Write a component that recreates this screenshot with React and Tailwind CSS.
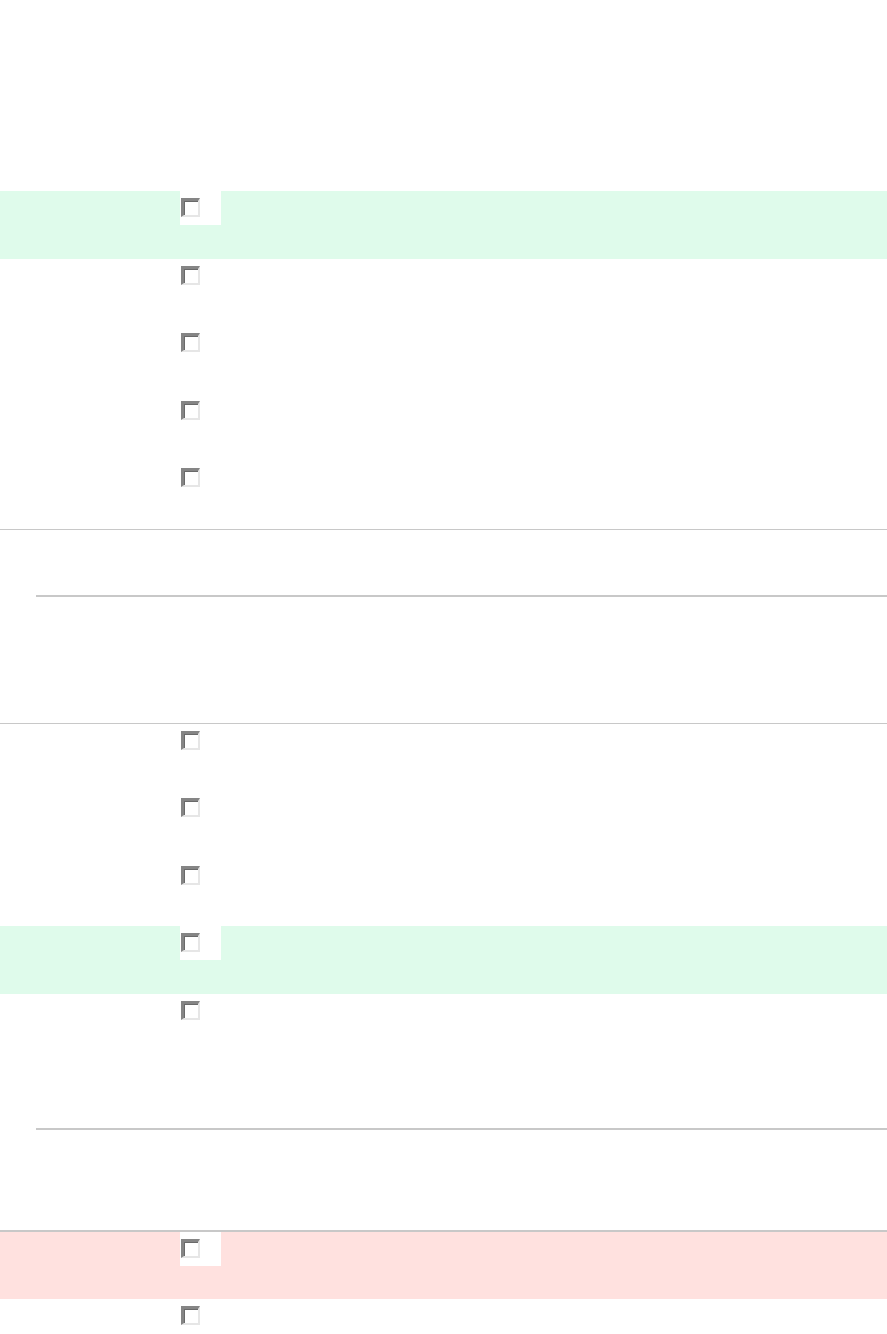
import React from 'react';

const Checkbox = () => (
  <span className="block w-[19px] h-[19px] border-t-[3px] border-l-[3px] border-b-2 border-r-2 border-t-[#858585] border-l-[#858585] border-b-[#e6e6e6] border-r-[#e6e6e6] bg-white shadow-[inset_1px_1px_0_#6a6a6a]" />
);

const Row = ({ tone }) => {
  const bg = tone === 'add' ? 'bg-[#dffbeb]' : tone === 'del' ? 'bg-[#ffe1df]' : 'bg-white';
  return (
    <div className={`flex h-[67.5px] ${bg}`}>
      <div className="w-[180px] shrink-0" />
      <div className="w-[41px] h-[34px] bg-white pt-[7px] pl-[1px]">
        <Checkbox />
      </div>
    </div>
  );
};

const App = () => {
  return (
    <div className="w-full min-h-screen bg-white font-['Liberation_Sans',sans-serif]">
      <div className="h-[191px]" />

      <Row tone="add" />
      <Row />
      <Row />
      <Row />
      <Row />

      <div className="h-px bg-[#c8c8c8]" />
      <div className="h-[65px]" />
      <div className="ml-[36px] h-[2px] bg-[#c8c8c8]" />
      <div className="h-[126px]" />
      <div className="h-px bg-[#c8c8c8]" />

      <Row />
      <Row />
      <Row />
      <Row tone="add" />
      <Row />

      <div className="h-[66.5px]" />
      <div className="ml-[36px] h-[2px] bg-[#c8c8c8]" />
      <div className="h-[100px]" />
      <div className="h-[2px] bg-[#c8c8c8]" />

      <Row tone="del" />
      <Row />
    </div>
  );
};

export default App;
